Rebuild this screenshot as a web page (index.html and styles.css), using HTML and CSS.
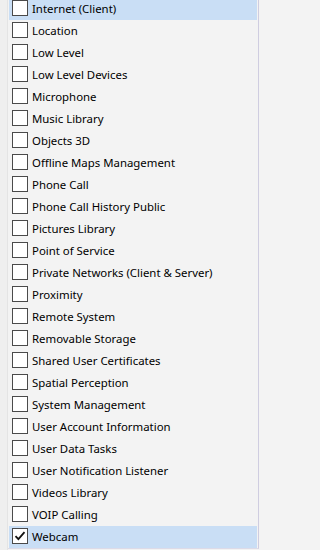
FILE: index.html
```html
<!DOCTYPE html>
<html>
<head>
<meta charset="utf-8">
<link rel="stylesheet" href="styles.css">
</head>
<body>
<div class="frame">
  <div class="gutter"></div>
  <div class="listbox">
    <ul class="list">
      <li class="row selected"><span class="box"></span><span class="label">Internet (Client)</span></li>
      <li class="row"><span class="box"></span><span class="label">Location</span></li>
      <li class="row"><span class="box"></span><span class="label">Low Level</span></li>
      <li class="row"><span class="box"></span><span class="label">Low Level Devices</span></li>
      <li class="row"><span class="box"></span><span class="label">Microphone</span></li>
      <li class="row"><span class="box"></span><span class="label">Music Library</span></li>
      <li class="row"><span class="box"></span><span class="label">Objects 3D</span></li>
      <li class="row"><span class="box"></span><span class="label">Offline Maps Management</span></li>
      <li class="row"><span class="box"></span><span class="label">Phone Call</span></li>
      <li class="row"><span class="box"></span><span class="label">Phone Call History Public</span></li>
      <li class="row"><span class="box"></span><span class="label">Pictures Library</span></li>
      <li class="row"><span class="box"></span><span class="label">Point of Service</span></li>
      <li class="row"><span class="box"></span><span class="label">Private Networks (Client &amp; Server)</span></li>
      <li class="row"><span class="box"></span><span class="label">Proximity</span></li>
      <li class="row"><span class="box"></span><span class="label">Remote System</span></li>
      <li class="row"><span class="box"></span><span class="label">Removable Storage</span></li>
      <li class="row"><span class="box"></span><span class="label">Shared User Certificates</span></li>
      <li class="row"><span class="box"></span><span class="label">Spatial Perception</span></li>
      <li class="row"><span class="box"></span><span class="label">System Management</span></li>
      <li class="row"><span class="box"></span><span class="label">User Account Information</span></li>
      <li class="row"><span class="box"></span><span class="label">User Data Tasks</span></li>
      <li class="row"><span class="box"></span><span class="label">User Notification Listener</span></li>
      <li class="row"><span class="box"></span><span class="label">Videos Library</span></li>
      <li class="row"><span class="box"></span><span class="label">VOIP Calling</span></li>
      <li class="row selected"><span class="box checked"><svg viewBox="0 0 14 14" width="14" height="14"><path d="M2.5 7.2 L5.4 10.2 L11.5 3.2" fill="none" stroke="#111" stroke-width="1.8"/></svg></span><span class="label">Webcam</span></li>
    </ul>
  </div>
</div>
</body>
</html>
```
FILE: styles.css
```css
html, body {
  margin: 0;
  padding: 0;
  background: #f3f3f3;
}
body {
  width: 260px;
  height: 550px;
  overflow: hidden;
  font-family: "Noto Sans", "Segoe UI", sans-serif;
  font-size: 11.4px;
  color: #000;
}
.frame {
  display: flex;
  height: 550px;
}
.gutter {
  width: 7px;
  background: #efefef;
  border-right: 1px solid #e4e4e4;
  flex: none;
}
.listbox {
  width: 249px;
  height: 548px;
  padding-left: 1px;
  border-right: 1px solid #cfcde0;
  border-bottom: 1px solid #dcdbe8;
  overflow: hidden;
  flex: none;
}
.list {
  list-style: none;
  margin: -2px 0 0 0;
  padding: 0 1px 0 0;
}
.row {
  display: flex;
  align-items: center;
  height: 22px;
  gap: 4px;
}
.row.selected {
  background: #c9def5;
}
.box {
  width: 14px;
  height: 14px;
  margin-left: 3px;
  margin-top: -2px;
  border: 1px solid #4a4a4a;
  background: #fff;
  flex: none;
  display: flex;
  align-items: center;
  justify-content: center;
}
.label {
  white-space: nowrap;
  line-height: 16px;
  margin-top: -1px;
}
```
